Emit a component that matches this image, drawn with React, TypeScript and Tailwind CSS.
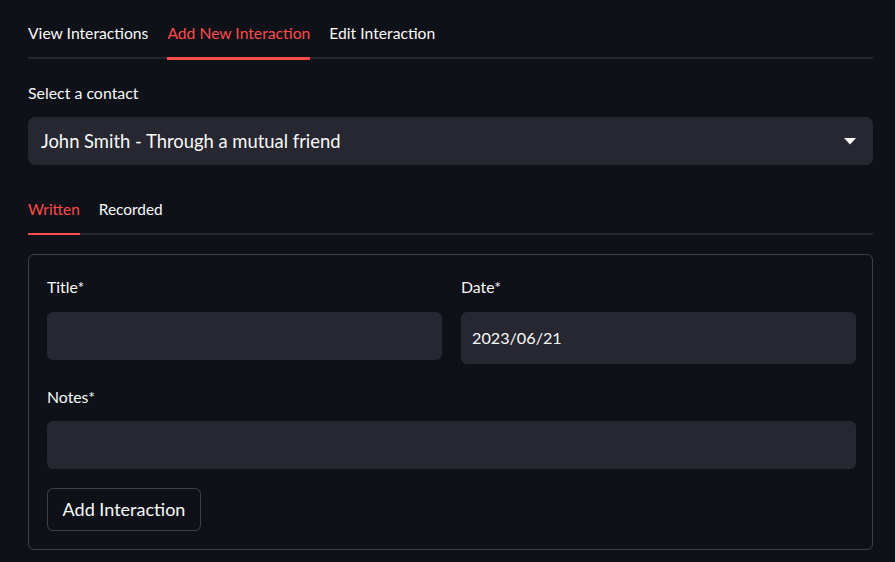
import React from "react";

function Field({ label, className, children }: { label: string; className?: string; children?: React.ReactNode }) {
  return (
    <div className={className}>
      <div className="h-[26px] flex items-center text-[15.8px] leading-none text-[#fafafa]">{label}</div>
      {children}
    </div>
  );
}

export default function App() {
  return (
    <div className="w-[895px] h-[562px] bg-[#0e1117] text-[#fafafa] overflow-hidden" style={{ fontFamily: "Lato, 'Open Sans', sans-serif" }}>
      <div className="pl-[28px] pr-[22px]">
        {/* Top tabs */}
        <div className="relative pt-[20px]">
          <div className="flex gap-[19px] text-[15.7px]">
            <div className="h-[37px] flex items-start pt-[2px]">View Interactions</div>
            <div className="h-[37px] flex items-start pt-[2px] text-[#ff4b4b] relative">
              Add New Interaction
              <div className="absolute left-0 right-0 bottom-[-3px] h-[3px] bg-[#ff4b4b]" />
            </div>
            <div className="h-[37px] flex items-start pt-[2px]">Edit Interaction</div>
          </div>
          <div className="h-[2px] bg-[#262730]" />
        </div>

        {/* Select */}
        <div className="mt-[24px] text-[15.9px] leading-none h-[20px] flex items-center">Select a contact</div>
        <div className="mt-[14px] h-[48px] rounded-[7px] bg-[#262730] flex items-center justify-between pl-[13px] pr-[17px]">
          <span className="text-[18.4px] pt-[2px]">John Smith - Through a mutual friend</span>
          <svg width="12" height="7" viewBox="0 0 12 7"><path d="M0 0 L12 0 L6 6.5 Z" fill="#fafafa" /></svg>
        </div>

        {/* Sub tabs */}
        <div className="mt-[32px]">
          <div className="flex gap-[19px] text-[15.4px]">
            <div className="h-[36px] relative text-[#ff4b4b] flex items-start pt-[1px]">
              Written
              <div className="absolute left-0 right-0 bottom-[-2px] h-[2px] bg-[#ff4b4b]" />
            </div>
            <div className="h-[36px] flex items-start pt-[1px]">Recorded</div>
          </div>
          <div className="h-[2px] bg-[#262730]" />
        </div>

        {/* Form */}
        <div className="mt-[19px] h-[296px] rounded-[6px] border border-[rgba(250,250,250,0.2)] pl-[18px] pr-[16px] pt-[19px]">
          <div className="flex gap-[19px]">
            <Field label="Title*" className="flex-1">
              <div className="mt-[12px] h-[48px] rounded-[6px] bg-[#262730]" />
            </Field>
            <Field label="Date*" className="flex-1">
              <div className="mt-[12px] h-[52px] rounded-[6px] bg-[#262730] flex items-center pl-[11px] text-[16.2px]">2023/06/21</div>
            </Field>
          </div>
          <Field label="Notes*" className="mt-[20px]">
            <div className="mt-[11px] h-[48px] rounded-[6px] bg-[#262730]" />
          </Field>
          <button className="mt-[19px] h-[43px] w-[154px] rounded-[6px] border border-[rgba(250,250,250,0.2)] bg-[#0e1117] text-[18px] text-[#fafafa]">
            Add Interaction
          </button>
        </div>
      </div>
    </div>
  );
}
